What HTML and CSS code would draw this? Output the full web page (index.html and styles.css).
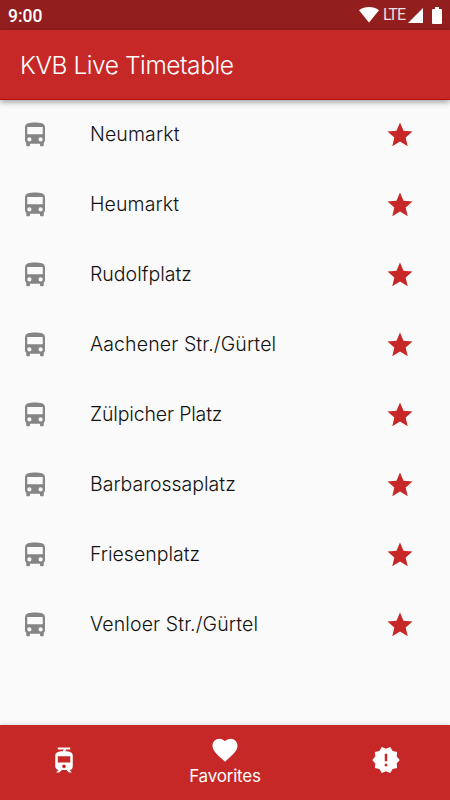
FILE: index.html
```html
<!DOCTYPE html>
<html lang="en">
<head>
    <meta charset="UTF-8">
    <meta name="viewport" content="width=device-width, initial-scale=1.0">
    <title>KVB Live Timetable</title>
    <link rel="stylesheet" href="styles.css">
</head>
<body>
    <svg width="0" height="0" class="sprite">
        <symbol id="bus" viewBox="0 0 24 24">
            <path d="M4 16c0 .88.39 1.67 1 2.22V20c0 .55.45 1 1 1h1c.55 0 1-.45 1-1v-1h8v1c0 .55.45 1 1 1h1c.55 0 1-.45 1-1v-1.78c.61-.55 1-1.34 1-2.22V6c0-3.5-3.58-4-8-4s-8 .5-8 4v10zm3.5 1.2a1.7 1.7 0 1 1 0-3.4 1.7 1.7 0 0 1 0 3.4zm9 0a1.7 1.7 0 1 1 0-3.4 1.7 1.7 0 0 1 0 3.4zM18.2 11.4H5.800V5.600h12.400z"/>
        </symbol>
        <symbol id="star" viewBox="0 0 24 24">
            <path d="M12 17.27L18.18 21l-1.64-7.03L22 9.24l-7.19-.61L12 2 9.19 8.63 2 9.24l5.46 4.73L5.82 21z"/>
        </symbol>
    </svg>
    <div class="status-bar">
        <span class="time">9:00</span>
        <svg class="wifi" width="20" height="16" viewBox="0 0 20 16"><path d="M0 3.2C5.5-1 14.5-1 20 3.2L10 15.5z"/></svg>
        <span class="lte">LTE</span>
        <svg class="signal" width="15" height="15" viewBox="0 0 15 15"><path d="M15 0v15H0z"/></svg>
        <svg class="battery" width="10" height="17" viewBox="0 0 10 17"><path d="M3 0h4v2h2q1 0 1 1v13q0 1-1 1H1q-1 0-1-1V3q0-1 1-1h2z"/></svg>
    </div>
    <header class="app-bar">
        <h1>KVB Live Timetable</h1>
    </header>
    <ul class="stations">
        <li><svg class="icon"><use href="#bus"/></svg><span class="name wide">Neumarkt</span><svg class="icon star"><use href="#star"/></svg></li>
        <li><svg class="icon"><use href="#bus"/></svg><span class="name wide">Heumarkt</span><svg class="icon star"><use href="#star"/></svg></li>
        <li><svg class="icon"><use href="#bus"/></svg><span class="name">Rudolfplatz</span><svg class="icon star"><use href="#star"/></svg></li>
        <li><svg class="icon"><use href="#bus"/></svg><span class="name wide">Aachener Str./Gürtel</span><svg class="icon star"><use href="#star"/></svg></li>
        <li><svg class="icon"><use href="#bus"/></svg><span class="name tight">Zülpicher Platz</span><svg class="icon star"><use href="#star"/></svg></li>
        <li><svg class="icon"><use href="#bus"/></svg><span class="name">Barbarossaplatz</span><svg class="icon star"><use href="#star"/></svg></li>
        <li><svg class="icon"><use href="#bus"/></svg><span class="name">Friesenplatz</span><svg class="icon star"><use href="#star"/></svg></li>
        <li><svg class="icon"><use href="#bus"/></svg><span class="name wide">Venloer Str./Gürtel</span><svg class="icon star"><use href="#star"/></svg></li>
    </ul>
    <nav class="bottom-nav">
        <a class="tab side">
            <svg class="icon" viewBox="0 0 24 24"><path d="M19 16.94V8.5c0-2.79-2.61-3.4-6.01-3.49l.76-1.51H17V2H7v1.5h4.75l-.76 1.52C7.86 5.11 5 5.73 5 8.5v8.44c0 1.45 1.19 2.66 2.59 2.97L6 21.5v.5h2.23l2-2H14l2 2h2v-.5L16.5 20h-.08c1.69 0 2.58-1.37 2.58-3.06zm-7 1.56c-.83 0-1.5-.67-1.5-1.5s.67-1.5 1.5-1.5 1.5.67 1.5 1.5-.67 1.5-1.5 1.5zm5-4.5H7V9h10v5z"/></svg>
        </a>
        <a class="tab active">
            <svg class="icon" viewBox="0 0 24 24"><path d="M12 21.35l-1.45-1.32C5.4 15.36 2 12.28 2 8.5 2 5.42 4.42 3 7.5 3c1.74 0 3.41.81 4.5 2.09C13.09 3.81 14.76 3 16.5 3 19.58 3 22 5.42 22 8.5c0 3.78-3.4 6.86-8.55 11.54L12 21.35z"/></svg>
            <span>Favorites</span>
        </a>
        <a class="tab side">
            <svg class="icon" viewBox="0 0 24 24"><path d="M23 12l-2.44-2.78.34-3.68-3.61-.82-1.89-3.18L12 3 8.6 1.54 6.71 4.72l-3.61.81.34 3.68L1 12l2.44 2.78-.34 3.69 3.61.82 1.89 3.18L12 21l3.4 1.46 1.89-3.18 3.61-.82-.34-3.68L23 12zm-10 5h-2v-2h2v2zm0-4h-2V7h2v6z"/></svg>
        </a>
    </nav>
</body>
</html>
```
FILE: styles.css
```css
body {
    margin: 0;
    height: 800px;
    display: flex;
    flex-direction: column;
    background-color: #fafafa;
    font-family: Inter, "Open Sans", sans-serif;
    overflow: hidden;
}

.sprite {
    position: absolute;
}

.status-bar {
    display: flex;
    align-items: center;
    box-sizing: border-box;
    height: 30px;
    padding: 0 8px;
    background-color: #931e1e;
    color: #fff;
    fill: #fff;
    font-family: Roboto, sans-serif;
}

.time {
    flex: 1;
    font-size: 17.5px;
    font-weight: 500;
    line-height: 30px;
    padding-top: 1px;
}

.lte {
    margin: 0 3px 0 4px;
    font-size: 16px;
    line-height: 30px;
    letter-spacing: -1px;
    color: #f0dede;
}

.battery {
    margin-left: 9px;
}

.app-bar {
    position: relative;
    display: flex;
    align-items: center;
    box-sizing: border-box;
    height: 70px;
    padding-left: 20px;
    background-color: #c62828;
    border-bottom: 1px solid #b80f0f;
    box-shadow: 0 2px 6px rgba(0, 0, 0, 0.38);
}

h1 {
    margin: 0;
    color: #fff;
    font-size: 24.5px;
    font-weight: 300;
    letter-spacing: -0.44px;
}

.stations {
    flex: 1;
    margin: 0;
    padding: 0;
    list-style: none;
}

.stations li {
    display: flex;
    align-items: center;
    height: 70px;
    padding: 0 35px 0 20px;
}

.icon {
    flex: none;
    width: 30px;
    height: 30px;
    fill: #858585;
}

.name {
    flex: 1;
    margin-left: 40px;
    padding-bottom: 2px;
    color: #111;
    font-size: 19.5px;
    font-weight: 300;
    white-space: nowrap;
}

.wide {
    letter-spacing: 0.12px;
}

.tight {
    letter-spacing: -0.15px;
}

.star {
    fill: #c62828;
}

.bottom-nav {
    display: flex;
    height: 75px;
    background-color: #c62828;
    box-shadow: 0 -1px 4px rgba(0, 0, 0, 0.12);
}

.tab {
    display: flex;
    flex-direction: column;
    align-items: center;
    justify-content: center;
    color: #fff;
}

.tab .icon {
    fill: #fff;
}

.side {
    width: 128px;
    padding-bottom: 5px;
}

.active {
    flex: 1;
    justify-content: flex-start;
    padding-top: 10px;
}

.active span {
    font-size: 17px;
    line-height: 22px;
    font-weight: 400;
    letter-spacing: -0.2px;
}
```
